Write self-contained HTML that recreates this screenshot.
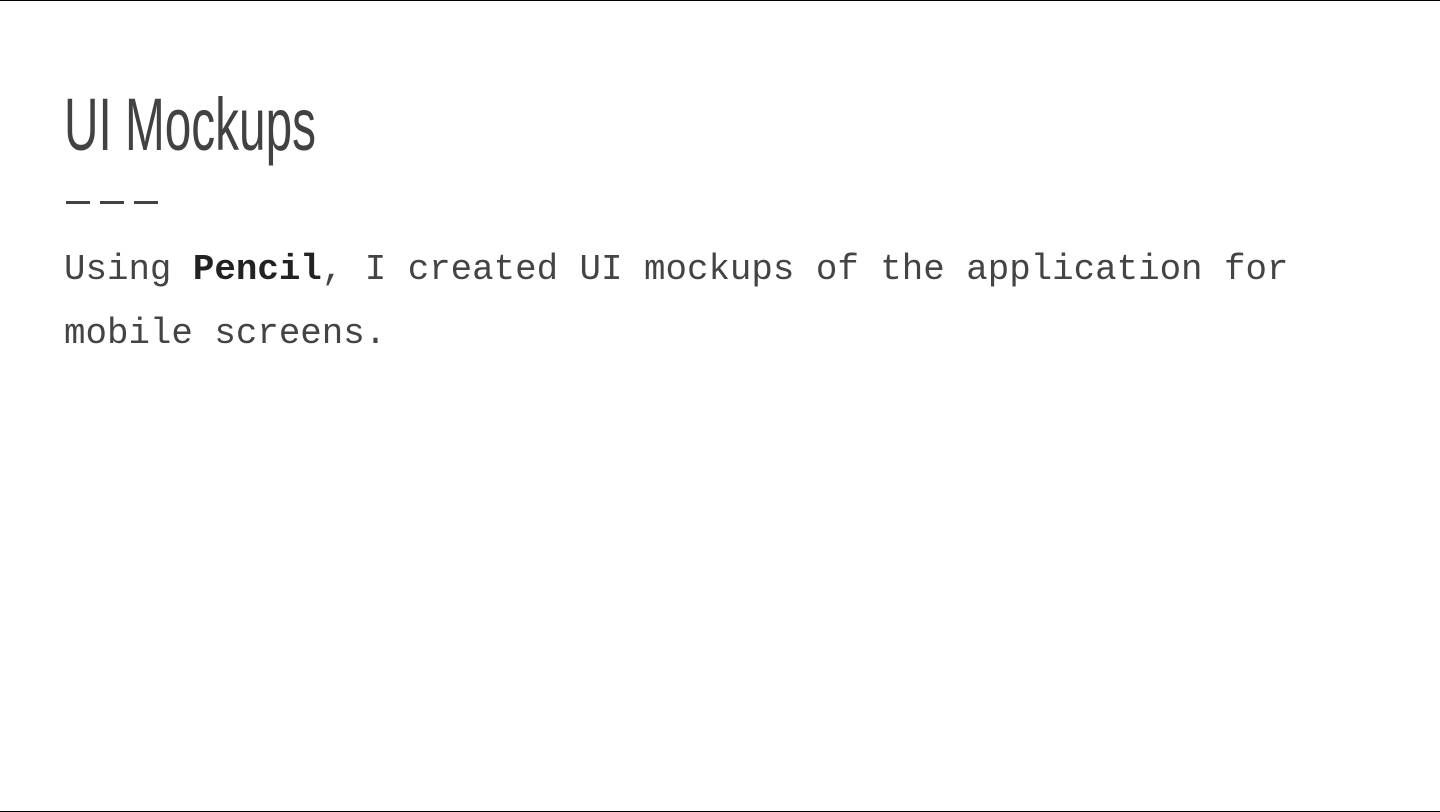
<!DOCTYPE html>
<html><head><meta charset="utf-8"><style>
html,body{margin:0;padding:0;background:#fff;width:1440px;height:812px;overflow:hidden;position:relative}
.bt{position:absolute;left:0;right:0;height:1px;background:#000}
h1{position:absolute;left:64px;top:88px;margin:0;font:74px/1 "Liberation Sans",sans-serif;color:#424242;transform-origin:0 0;transform:scaleX(0.645);white-space:nowrap;letter-spacing:0}
.d{position:absolute;top:201px;width:24px;height:3px;background:#424242}
p{position:absolute;left:64px;top:238px;margin:0;font:35.8px/64px "Liberation Mono",monospace;color:#444;width:1300px;white-space:nowrap}
b{color:#222}
</style></head><body>
<div class="bt" style="top:0"></div>
<div class="bt" style="top:811px"></div>
<h1>UI Mockups</h1>
<div class="d" style="left:66px"></div><div class="d" style="left:100px"></div><div class="d" style="left:134px"></div>
<p>Using <b>Pencil</b>, I created UI mockups of the application for<br>mobile screens.</p>
</body></html>
